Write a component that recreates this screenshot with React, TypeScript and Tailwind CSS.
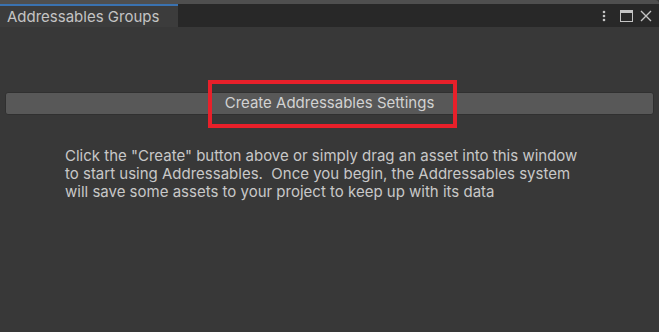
export default function App() {
  return (
    <div
      className="w-[659px] h-[332px] overflow-hidden bg-[#383838] flex flex-col"
      style={{ fontFamily: "Inter, 'Noto Sans', sans-serif" }}
    >
      {/* window top strip */}
      <div className="h-[4px] bg-[#4f4f4f] rounded-tr-[10px] shrink-0" />

      {/* tab header */}
      <div className="h-[23px] bg-[#282828] flex items-stretch shrink-0">
        <div className="w-[178px] bg-[#3c3c3c] border-t-2 border-[#3a72b0] flex items-center pl-[7px]">
          <span className="text-[15px] text-[#c4c4c4] leading-none">Addressables Groups</span>
        </div>
        <div className="flex-1" />
        <div className="flex items-center pr-[7px]">
          <svg width="4" height="12" viewBox="0 0 4 12" className="mr-[14px]">
            <circle cx="2" cy="2" r="1.3" fill="#c4c4c4" />
            <circle cx="2" cy="6" r="1.3" fill="#c4c4c4" />
            <circle cx="2" cy="10" r="1.3" fill="#c4c4c4" />
          </svg>
          <svg width="13" height="12" viewBox="0 0 13 12" className="mr-[7px]">
            <rect x="0.5" y="0.5" width="12" height="11" fill="none" stroke="#c4c4c4" strokeWidth="1" />
            <rect x="0.5" y="0.5" width="12" height="2.5" fill="#c4c4c4" />
          </svg>
          <svg width="12" height="12" viewBox="0 0 12 12">
            <path d="M1 1 L11 11 M11 1 L1 11" stroke="#c4c4c4" strokeWidth="1.4" />
          </svg>
        </div>
      </div>

      {/* content */}
      <div className="flex-1 px-[5px] pt-[65px]">
        <div className="relative">
          <button className="w-full h-[23px] bg-[#585858] border border-[#303030] rounded-[3px] text-[15px] text-[#d2d2d2] flex items-center justify-center">
            Create Addressables Settings
          </button>
          <div className="absolute left-[203px] top-[-12px] w-[249px] h-[48px] border-[4px] border-[#e8202a] pointer-events-none" />
        </div>
        <p className="mt-[32px] ml-[60px] text-[15px] leading-[18px] text-[#c8c8c8]">
          Click the "Create" button above or simply drag an asset into this window
          <br />
          to start using Addressables.&nbsp; Once you begin, the Addressables system
          <br />
          will save some assets to your project to keep up with its data
        </p>
      </div>
    </div>
  );
}
